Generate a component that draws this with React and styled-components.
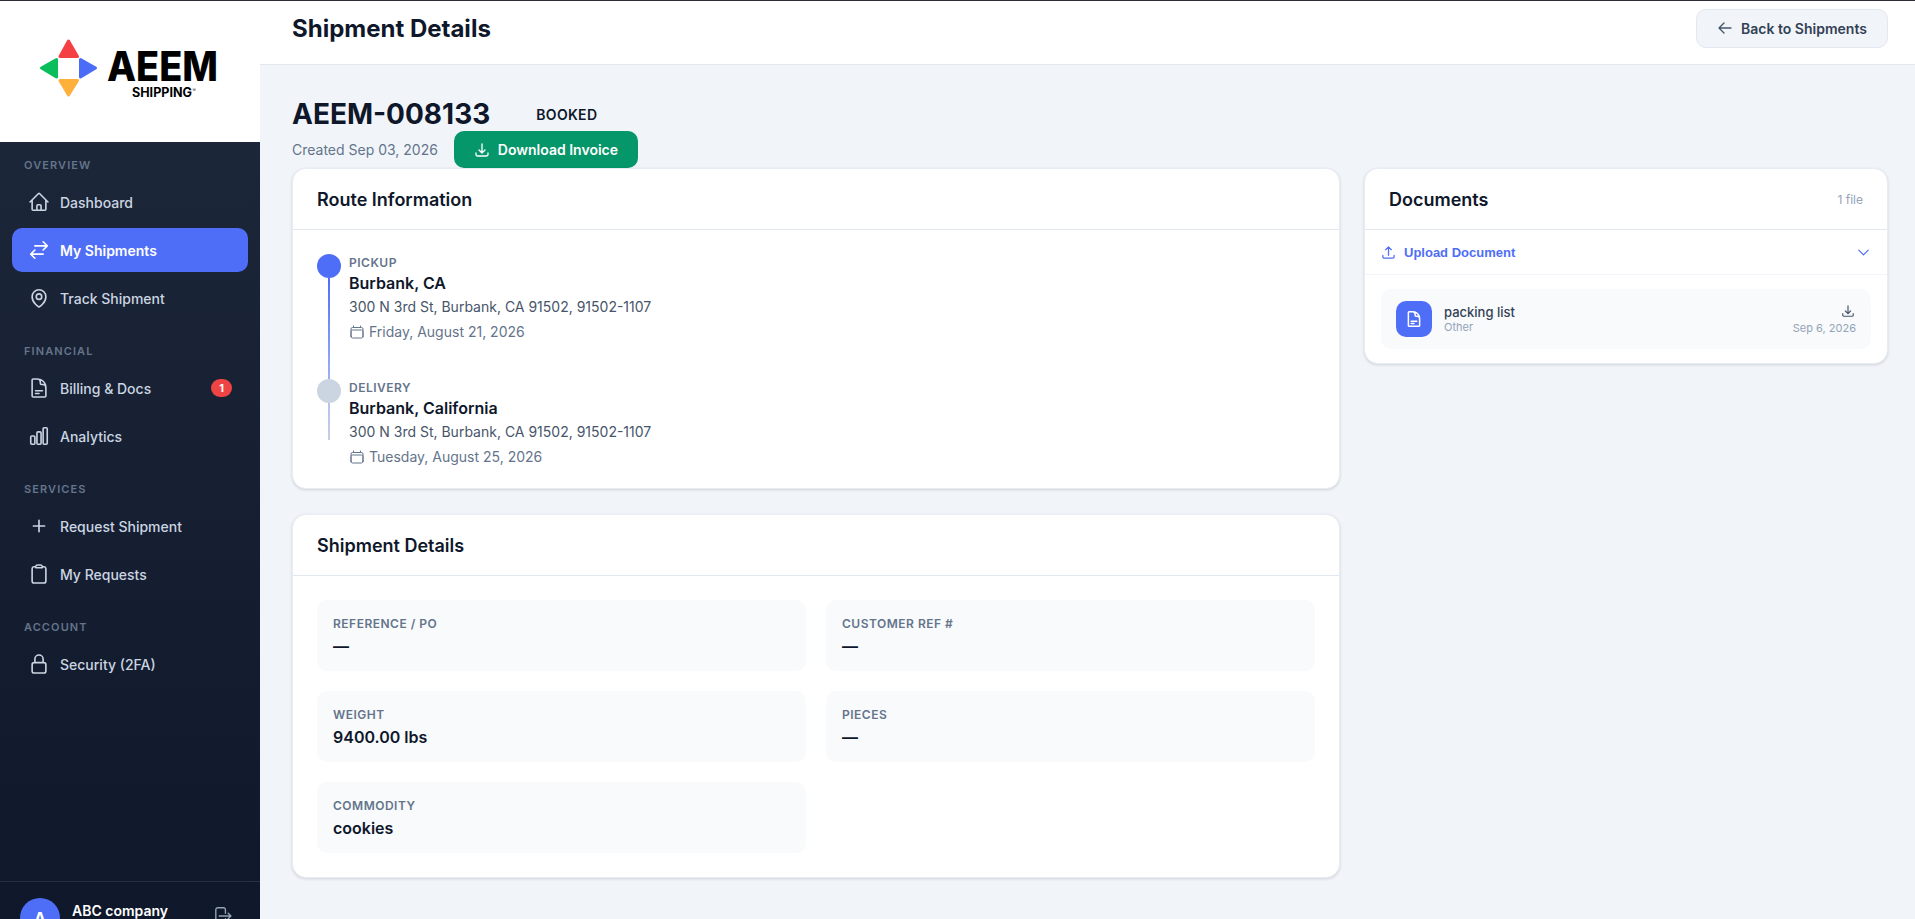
import React from "react";
import styled, { createGlobalStyle } from "styled-components";
import {
  HiOutlineHome,
  HiOutlineArrowsRightLeft,
  HiOutlineMapPin,
  HiOutlineDocumentText,
  HiOutlineChartBar,
  HiOutlinePlus,
  HiOutlineClipboard,
  HiOutlineLockClosed,
  HiOutlineArrowRightOnRectangle,
  HiOutlineArrowDownTray,
  HiOutlineArrowUpTray,
  HiOutlineArrowLeft,
  HiOutlineCalendar,
  HiOutlineChevronDown,
} from "react-icons/hi2";

const Global = createGlobalStyle`
  * { box-sizing: border-box; }
  html, body { margin: 0; height: 100%; overflow: hidden; }
  body { font-family: Inter, "Liberation Sans", sans-serif; background: #f1f5f9; color: #0f172a; }
`;

const Page = styled.div`
  height: 919px;
  overflow: hidden;
  display: flex;
  flex-direction: column;
  background: #f1f5f9;
`;
const TopEdge = styled.div`
  height: 1px;
  flex: none;
  background: #2a2d33;
`;
const Shell = styled.div`
  display: flex;
  flex: none;
  height: 953px;
`;
const Sidebar = styled.aside`
  width: 260px;
  flex: none;
  display: flex;
  flex-direction: column;
  background: linear-gradient(180deg, #1e293b 0%, #0f172a 100%);
`;
const LogoArea = styled.div`
  height: 141px;
  flex: none;
  background: #fff;
  display: flex;
  align-items: flex-start;
  justify-content: flex-start;
`;
const Nav = styled.nav`
  display: flex;
  flex-direction: column;
  gap: 24px;
  padding: 16px 12px 0;
`;
const NavGroup = styled.div`
  display: flex;
  flex-direction: column;
  gap: 4px;
`;
const GroupLabel = styled.div`
  height: 14px;
  line-height: 14px;
  margin: 0 0 4px 12px;
  font-size: 11px;
  font-weight: 600;
  letter-spacing: 1.1px;
  text-transform: uppercase;
  color: #64748b;
`;
const NavItem = styled.a`
  height: 44px;
  display: flex;
  align-items: center;
  gap: 10px;
  padding: 0 16px 0 15px;
  border-radius: 10px;
  font-size: 14px;
  font-weight: ${(p) => (p.$active ? 600 : 500)};
  color: ${(p) => (p.$active ? "#ffffff" : "#cbd5e1")};
  background: ${(p) => (p.$active ? "#4f6ef7" : "transparent")};
`;
const NavIcon = styled.span`
  width: 23px;
  height: 22px;
  flex: none;
  display: flex;
  align-items: center;
  justify-content: center;
  font-size: ${(p) => (p.$small ? "18px" : "22px")};
`;
const NavBadge = styled.span`
  margin-left: auto;
  width: 21px;
  height: 18px;
  border-radius: 9px;
  background: #ef4444;
  color: #fff;
  font-size: 11px;
  font-weight: 700;
  display: flex;
  align-items: center;
  justify-content: center;
`;
const SideFooter = styled.div`
  margin-top: auto;
  height: 73px;
  border-top: 1px solid rgba(255, 255, 255, 0.1);
  padding: 16px 20px;
  display: flex;
  align-items: flex-start;
  gap: 12px;
`;
const Avatar = styled.div`
  width: 40px;
  height: 40px;
  flex: none;
  border-radius: 50%;
  background: #4f6ef7;
  color: #fff;
  font-size: 16px;
  font-weight: 700;
  display: flex;
  align-items: center;
  justify-content: center;
`;
const UserName = styled.div`
  margin-top: 4px;
  font-size: 14px;
  line-height: 17px;
  font-weight: 600;
  color: #fff;
  flex: 1;
`;
const LogoutIcon = styled.span`
  margin: 7px 7px 0 0;
  color: #94a3b8;
  display: flex;
  font-size: 22px;
`;

const Main = styled.main`
  flex: 1;
  min-width: 0;
  display: flex;
  flex-direction: column;
`;
const TopBar = styled.header`
  height: 64px;
  flex: none;
  background: #fff;
  border-bottom: 1px solid #e2e8f0;
  display: flex;
  align-items: center;
  justify-content: space-between;
  padding: 0 27px 9px 32px;
`;
const PageTitle = styled.h1`
  margin: 0;
  font-size: 24px;
  font-weight: 700;
  color: #0f172a;
`;
const BackButton = styled.button`
  height: 39px;
  width: 192px;
  display: flex;
  align-items: center;
  justify-content: center;
  gap: 8px;
  background: #f1f5f9;
  border: 1px solid #e2e8f0;
  border-radius: 10px;
  font: 600 14px Inter, sans-serif;
  color: #334155;
  svg { font-size: 16px; color: #475569; }
`;
const Content = styled.div`
  padding: 32px 27px 0 32px;
`;
const TitleRow = styled.div`
  display: flex;
  align-items: center;
  height: 34px;
`;
const ShipmentId = styled.h2`
  margin: 0;
  font-size: 28px;
  line-height: 34px;
  font-weight: 700;
  color: #0f172a;
`;
const Status = styled.span`
  margin-left: 46px;
  font-size: 14px;
  font-weight: 600;
  letter-spacing: 0.3px;
  color: #0f172a;
`;
const MetaRow = styled.div`
  display: flex;
  align-items: center;
  gap: 16px;
`;
const Created = styled.span`
  font-size: 14px;
  color: #64748b;
`;
const InvoiceButton = styled.button`
  height: 37px;
  width: 184px;
  display: flex;
  align-items: center;
  justify-content: center;
  gap: 8px;
  background: #059669;
  border: 0;
  border-radius: 10px;
  color: #fff;
  font: 600 14px Inter, sans-serif;
  svg { font-size: 16px; }
`;
const Columns = styled.div`
  display: grid;
  grid-template-columns: 2fr 1fr;
  gap: 24px;
  align-items: start;
`;
const Stack = styled.div`
  display: flex;
  flex-direction: column;
  gap: 25px;
`;
const Card = styled.section`
  background: #fff;
  border-radius: 14px;
  border: 1px solid #e8edf3;
  box-shadow: 0 1px 3px rgba(15, 23, 42, 0.15);
`;
const CardHeader = styled.div`
  height: 61px;
  padding: 0 24px;
  border-bottom: 1px solid #e2e8f0;
  display: flex;
  align-items: center;
  justify-content: space-between;
`;
const CardTitle = styled.h3`
  margin: 0;
  font-size: 18px;
  font-weight: 600;
  color: #0f172a;
`;
const FileCount = styled.span`
  font-size: 12px;
  color: #94a3b8;
`;
const RouteBody = styled.div`
  padding: 24px;
`;
const Stop = styled.div`
  display: flex;
  gap: 8px;
  height: ${(p) => (p.$last ? "85px" : "125px")};
`;
const Marker = styled.div`
  width: 24px;
  flex: none;
  display: flex;
  flex-direction: column;
  align-items: center;
`;
const Dot = styled.div`
  width: 24px;
  height: 24px;
  flex: none;
  border-radius: 50%;
  background: ${(p) => (p.$muted ? "#cbd5e1" : "#4f6ef7")};
`;
const Connector = styled.div`
  width: 2px;
  height: ${(p) => (p.$last ? "37px" : "101px")};
  background: ${(p) =>
    p.$last
      ? "linear-gradient(180deg, #b4c2ec, #c5d0e2)"
      : "linear-gradient(180deg, #4f6ef7, #a0aff3)"};
`;
const StopText = styled.div`
  display: flex;
  flex-direction: column;
  padding-top: 1px;
`;
const StopLabel = styled.div`
  font-size: 12px;
  line-height: 15px;
  font-weight: 600;
  letter-spacing: 0.5px;
  text-transform: uppercase;
  color: #64748b;
`;
const StopCity = styled.div`
  margin-top: 2px;
  font-size: 16px;
  line-height: 22px;
  font-weight: 600;
  color: #0f172a;
`;
const StopAddress = styled.div`
  margin-top: 3px;
  font-size: 14px;
  line-height: 20px;
  color: #475569;
`;
const StopDate = styled.div`
  margin-top: 5px;
  display: flex;
  align-items: center;
  gap: 4px;
  font-size: 14px;
  line-height: 20px;
  color: #64748b;
  svg { font-size: 16px; }
`;
const DetailGrid = styled.div`
  display: grid;
  grid-template-columns: 1fr 1fr;
  gap: 20px;
  padding: 24px;
`;
const Detail = styled.div`
  height: 71px;
  padding: 17px 16px 0;
  background: #f8fafc;
  border-radius: 10px;
`;
const DetailLabel = styled.div`
  font-size: 12px;
  line-height: 14px;
  font-weight: 600;
  letter-spacing: 0.5px;
  text-transform: uppercase;
  color: #64748b;
`;
const DetailValue = styled.div`
  margin-top: 4px;
  font-size: 16px;
  line-height: 22px;
  font-weight: 600;
  color: #0f172a;
`;
const UploadRow = styled.button`
  width: 100%;
  height: 45px;
  display: flex;
  align-items: center;
  gap: 8px;
  padding: 0 16px;
  background: none;
  border: 0;
  border-bottom: 1px solid #f1f5f9;
  color: #4f6ef7;
  font: 700 13px "Liberation Sans", Arial, sans-serif;
  svg { font-size: 15px; }
`;
const UploadChevron = styled.span`
  margin-left: auto;
  display: flex;
`;
const DocList = styled.div`
  padding: 14px 16px;
`;
const DocItem = styled.div`
  height: 60px;
  display: flex;
  align-items: center;
  gap: 12px;
  padding: 0 15px;
  background: #f8fafc;
  border-radius: 10px;
`;
const DocIcon = styled.div`
  width: 36px;
  height: 36px;
  flex: none;
  border-radius: 10px;
  background: #4f6ef7;
  color: #fff;
  display: flex;
  align-items: center;
  justify-content: center;
  font-size: 18px;
`;
const DocInfo = styled.div`
  flex: 1;
`;
const DocName = styled.div`
  font-size: 13px;
  line-height: 16px;
  font-weight: 500;
  color: #334155;
`;
const DocType = styled.div`
  font-size: 11px;
  line-height: 14px;
  color: #94a3b8;
`;
const DocMeta = styled.div`
  display: flex;
  flex-direction: column;
  align-items: flex-end;
  gap: 3px;
`;
const DocDownload = styled.span`
  display: flex;
  margin-right: 1px;
  color: #475569;
  font-size: 14px;
`;
const DocDate = styled.span`
  font-size: 11px;
  line-height: 14px;
  color: #94a3b8;
`;

const Logo = () => (
  <svg width="260" height="141" viewBox="0 0 260 141">
    <g strokeLinejoin="round" strokeWidth="3">
      <polygon points="68.5,40 60,55.5 77.5,55.5" fill="#f43f43" stroke="#f43f43" />
      <polygon points="41.5,67 56.5,58.5 56.5,76" fill="#0abf5b" stroke="#0abf5b" />
      <polygon points="95.5,67 80.5,58.5 80.5,76" fill="#4a6cf7" stroke="#4a6cf7" />
      <polygon points="68.5,94 60,79.5 77.5,79.5" fill="#ffb03b" stroke="#ffb03b" />
    </g>
    <text x="107" y="80" fontFamily="Inter, sans-serif" fontWeight="800" fontSize="41" textLength="111" lengthAdjust="spacingAndGlyphs" fill="#000">AEEM</text>
    <text x="132" y="96" fontFamily="Inter, sans-serif" fontWeight="700" fontSize="12.5" textLength="60" lengthAdjust="spacingAndGlyphs" fill="#000">SHIPPING</text>
    <text x="192.5" y="91" fontFamily="Inter, sans-serif" fontSize="5" fill="#333">®</text>
  </svg>
);

const groups = [
  { label: "Overview", items: [
    { icon: HiOutlineHome, text: "Dashboard" },
    { icon: HiOutlineArrowsRightLeft, text: "My Shipments", active: true },
    { icon: HiOutlineMapPin, text: "Track Shipment" },
  ]},
  { label: "Financial", items: [
    { icon: HiOutlineDocumentText, text: "Billing & Docs", badge: 1 },
    { icon: HiOutlineChartBar, text: "Analytics" },
  ]},
  { label: "Services", items: [
    { icon: HiOutlinePlus, text: "Request Shipment", small: true },
    { icon: HiOutlineClipboard, text: "My Requests" },
  ]},
  { label: "Account", items: [
    { icon: HiOutlineLockClosed, text: "Security (2FA)" },
  ]},
];

const details = [
  ["Reference / PO", "—"],
  ["Customer Ref #", "—"],
  ["Weight", "9400.00 lbs"],
  ["Pieces", "—"],
  ["Commodity", "cookies"],
];

export default function App() {
  return (
    <Page>
      <Global />
      <TopEdge />
      <Shell>
        <Sidebar>
          <LogoArea><Logo /></LogoArea>
          <Nav>
            {groups.map((g) => (
              <NavGroup key={g.label}>
                <GroupLabel>{g.label}</GroupLabel>
                {g.items.map((it) => (
                  <NavItem key={it.text} $active={it.active}>
                    <NavIcon $small={it.small}>
                      <it.icon strokeWidth={it.small ? 2.2 : 1.75} />
                    </NavIcon>
                    {it.text}
                    {it.badge && <NavBadge>{it.badge}</NavBadge>}
                  </NavItem>
                ))}
              </NavGroup>
            ))}
          </Nav>
          <SideFooter>
            <Avatar>A</Avatar>
            <UserName>ABC company</UserName>
            <LogoutIcon><HiOutlineArrowRightOnRectangle /></LogoutIcon>
          </SideFooter>
        </Sidebar>
        <Main>
          <TopBar>
            <PageTitle>Shipment Details</PageTitle>
            <BackButton><HiOutlineArrowLeft strokeWidth={2} />Back to Shipments</BackButton>
          </TopBar>
          <Content>
            <TitleRow>
              <ShipmentId>AEEM-008133</ShipmentId>
              <Status>BOOKED</Status>
            </TitleRow>
            <MetaRow>
              <Created>Created Sep 03, 2026</Created>
              <InvoiceButton><HiOutlineArrowDownTray strokeWidth={2} />Download Invoice</InvoiceButton>
            </MetaRow>
            <Columns>
              <Stack>
                <Card>
                  <CardHeader><CardTitle>Route Information</CardTitle></CardHeader>
                  <RouteBody>
                    <Stop>
                      <Marker><Dot /><Connector /></Marker>
                      <StopText>
                        <StopLabel>Pickup</StopLabel>
                        <StopCity>Burbank, CA</StopCity>
                        <StopAddress>300 N 3rd St, Burbank, CA 91502, 91502-1107</StopAddress>
                        <StopDate><HiOutlineCalendar />Friday, August 21, 2026</StopDate>
                      </StopText>
                    </Stop>
                    <Stop $last>
                      <Marker><Dot $muted /><Connector $last /></Marker>
                      <StopText>
                        <StopLabel>Delivery</StopLabel>
                        <StopCity>Burbank, California</StopCity>
                        <StopAddress>300 N 3rd St, Burbank, CA 91502, 91502-1107</StopAddress>
                        <StopDate><HiOutlineCalendar />Tuesday, August 25, 2026</StopDate>
                      </StopText>
                    </Stop>
                  </RouteBody>
                </Card>
                <Card>
                  <CardHeader><CardTitle>Shipment Details</CardTitle></CardHeader>
                  <DetailGrid>
                    {details.map(([k, v]) => (
                      <Detail key={k}>
                        <DetailLabel>{k}</DetailLabel>
                        <DetailValue>{v}</DetailValue>
                      </Detail>
                    ))}
                  </DetailGrid>
                </Card>
              </Stack>
              <Card>
                <CardHeader>
                  <CardTitle>Documents</CardTitle>
                  <FileCount>1 file</FileCount>
                </CardHeader>
                <UploadRow>
                  <HiOutlineArrowUpTray strokeWidth={2} />
                  Upload Document
                  <UploadChevron><HiOutlineChevronDown strokeWidth={2} /></UploadChevron>
                </UploadRow>
                <DocList>
                  <DocItem>
                    <DocIcon><HiOutlineDocumentText strokeWidth={2} /></DocIcon>
                    <DocInfo>
                      <DocName>packing list</DocName>
                      <DocType>Other</DocType>
                    </DocInfo>
                    <DocMeta>
                      <DocDownload><HiOutlineArrowDownTray strokeWidth={2} /></DocDownload>
                      <DocDate>Sep 6, 2026</DocDate>
                    </DocMeta>
                  </DocItem>
                </DocList>
              </Card>
            </Columns>
          </Content>
        </Main>
      </Shell>
    </Page>
  );
}
